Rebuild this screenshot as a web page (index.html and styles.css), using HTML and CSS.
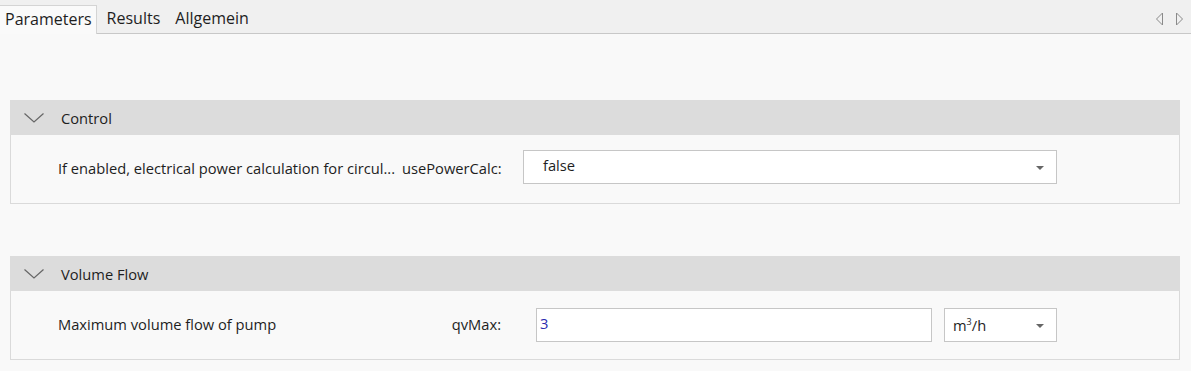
FILE: index.html
```html
<!DOCTYPE html>
<html lang="en">
<head>
  <meta charset="UTF-8">
  <title>Parameters</title>
  <link rel="stylesheet" href="styles.css">
</head>
<body>
  <!-- Tab strip -->
  <div class="tabbar">
    <div class="tab active">Parameters</div>
    <div class="tab">Results</div>
    <div class="tab">Allgemein</div>
    <div class="tab-scroll">
      <svg width="9" height="14" viewBox="0 0 9 14"><path d="M7.5 1 L1.5 7 L7.5 13 Z" fill="none" stroke="#8a8a8a" stroke-width="1"/></svg>
      <svg width="9" height="14" viewBox="0 0 9 14"><path d="M1.5 1 L7.5 7 L1.5 13 Z" fill="none" stroke="#8a8a8a" stroke-width="1"/></svg>
    </div>
  </div>

  <div class="content">
    <!-- Control group -->
    <div class="group">
      <div class="group-header">
        <svg class="chevron" width="20" height="10" viewBox="0 0 20 10"><path d="M0.5 0.5 L10 9 L19.5 0.5" fill="none" stroke="#666" stroke-width="1.2"/></svg>
        <span>Control</span>
      </div>
      <div class="group-body">
        <div class="row">
          <div class="desc">If enabled, electrical power calculation for circul...</div>
          <div class="name">usePowerCalc:</div>
          <div class="select wide">
            <span>false</span>
            <span class="caret"></span>
          </div>
        </div>
      </div>
    </div>

    <!-- Volume Flow group -->
    <div class="group">
      <div class="group-header">
        <svg class="chevron" width="20" height="10" viewBox="0 0 20 10"><path d="M0.5 0.5 L10 9 L19.5 0.5" fill="none" stroke="#666" stroke-width="1.2"/></svg>
        <span>Volume Flow</span>
      </div>
      <div class="group-body">
        <div class="row">
          <div class="desc">Maximum volume flow of pump</div>
          <div class="name">qvMax:</div>
          <div class="input">3</div>
          <div class="select unit">
            <span>m<sup>3</sup>/h</span>
            <span class="caret"></span>
          </div>
        </div>
      </div>
    </div>
  </div>
</body>
</html>
```

FILE: styles.css
```css
/* Parameter editor panel */
body {
  margin: 0;
  font-family: "Open Sans", "Noto Sans", sans-serif;
  font-size: 14.7px;
  color: #1e1e1e;
  background-color: #f9f9f9;
  width: 1191px;
  height: 371px;
  overflow: hidden;
}
.tabbar {
  display: flex;
  align-items: flex-end;
  background-color: #f0f0f0;
  border-bottom: 1px solid #c8c8c8;
  box-sizing: border-box;
  padding-top: 5px;
  height: 34px;
  font-size: 16px;
}
.tab {
  padding: 0 5px 0 10px;
  height: 28px;
  line-height: 27px;
  box-sizing: border-box;
}
.tab.active {
  background-color: #fafafa;
  border: 1px solid #d4d4d4;
  border-left: none;
  border-bottom: none;
  margin-bottom: -1px;
  height: 29px;
  padding: 0 4px 0 5px;
}
.tab-scroll {
  margin-left: auto;
  display: flex;
  gap: 11px;
  padding-right: 7px;
  height: 28px;
  align-items: center;
}
.content {
  padding: 66px 11px 0 10px;
  display: flex;
  flex-direction: column;
  gap: 52px;
}
.group-header {
  display: flex;
  align-items: center;
  height: 35px;
  background-color: #dcdcdc;
  padding-left: 14px;
  gap: 17px;
}
.chevron {
  margin-top: 1px;
}
.group-body {
  border: 1px solid #dadada;
  border-top: none;
  height: 69px;
  box-sizing: border-box;
}
.row {
  display: flex;
  align-items: center;
  height: 66px;
  padding-left: 47px;
}
.desc {
  width: 344px;
  white-space: nowrap;
}
.name {
  width: 99px;
  text-align: right;
  white-space: nowrap;
}
.select, .input {
  display: flex;
  align-items: center;
  height: 34px;
  box-sizing: border-box;
  background-color: #fff;
  border: 1px solid #c6c6c6;
}
.select.wide {
  margin-left: 22px;
  width: 534px;
  padding: 0 12px 0 19px;
  justify-content: space-between;
  margin-top: -3px;
  align-items: flex-start;
  padding-top: 4px;
}
.select.wide .caret {
  margin-top: 11px;
}
.input {
  margin-left: 35px;
  width: 396px;
  padding-left: 3px;
  color: #2b2bb0;
  margin-top: 1px;
  align-items: flex-start;
  padding-top: 4px;
}
.select.unit {
  margin-left: 12px;
  width: 113px;
  padding: 0 12px 0 8px;
  justify-content: space-between;
  margin-top: 1px;
}
.select.unit sup {
  font-size: 9px;
}
.caret {
  width: 0;
  height: 0;
  border-left: 4px solid transparent;
  border-right: 4px solid transparent;
  border-top: 4px solid #666;
  margin-top: 2px;
}
```
